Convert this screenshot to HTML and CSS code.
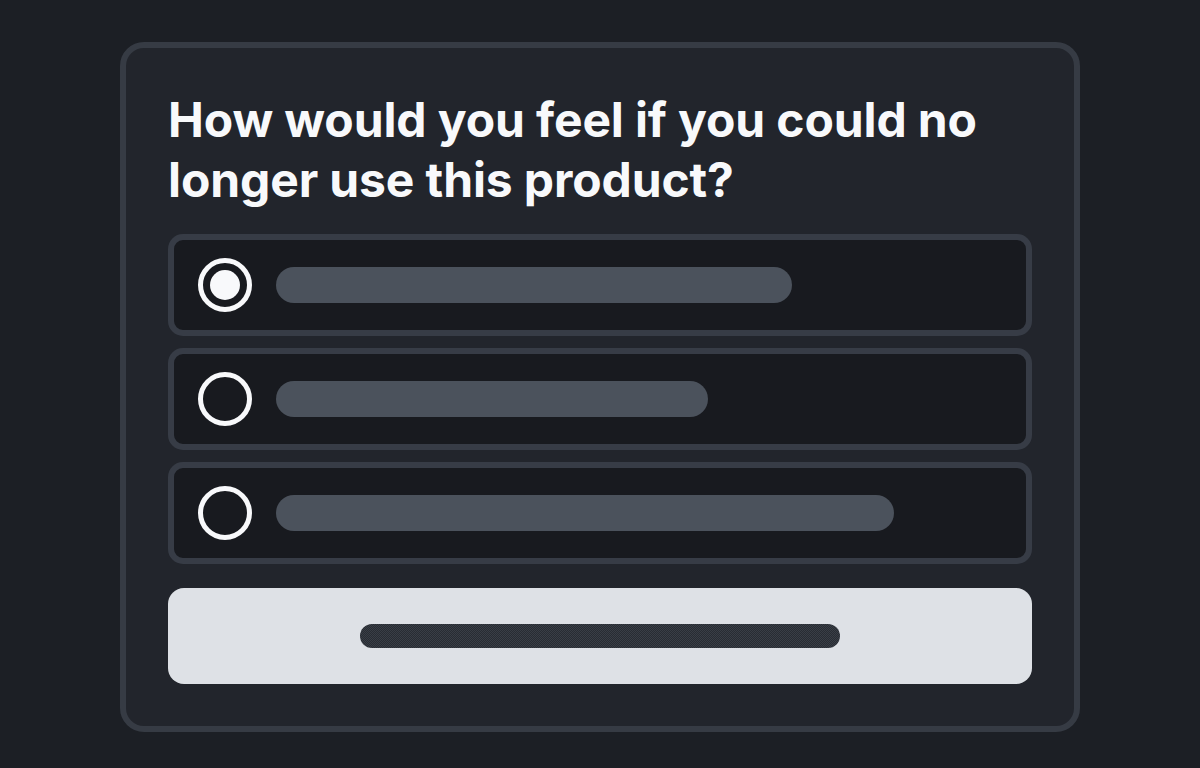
FILE: index.html
```html
<!DOCTYPE html>
<html lang="en">
<head>
    <meta charset="UTF-8">
    <meta name="viewport" content="width=device-width, initial-scale=1.0">
    <title>Survey</title>
    <link rel="stylesheet" href="styles.css">
</head>
<body>

    <div class="survey-card">
        <h1 class="question">How would you feel if you could no longer use this product?</h1>

        <div class="options">
            <div class="option">
                <span class="radio checked"></span>
                <span class="placeholder" style="width: 516px"></span>
            </div>
            <div class="option">
                <span class="radio"></span>
                <span class="placeholder" style="width: 432px"></span>
            </div>
            <div class="option">
                <span class="radio"></span>
                <span class="placeholder" style="width: 618px"></span>
            </div>
        </div>

        <button class="submit-btn"><span class="btn-label"></span></button>
    </div>

</body>
</html>
```

FILE: styles.css
```css
body {
    margin: 0;
    padding: 42px 0 0;
    background-color: #1c1f25;
    font-family: "Inter", "Noto Sans", sans-serif;
}
.survey-card {
    width: 864px;
    margin: 0 auto;
    padding: 42px;
    background-color: #22252c;
    border: 6px solid #363b44;
    border-radius: 24px;
}
.question {
    margin: 0 0 24px;
    font-size: 48px;
    line-height: 60px;
    font-weight: 700;
    letter-spacing: -0.12px;
    color: #f8f9fb;
}
.options {
    display: flex;
    flex-direction: column;
    gap: 12px;
}
.option {
    display: flex;
    align-items: center;
    gap: 24px;
    height: 90px;
    padding: 0 24px;
    background-color: #181a1f;
    border: 6px solid #373c46;
    border-radius: 15px;
}
.radio {
    box-sizing: border-box;
    width: 54px;
    height: 54px;
    border: 5px solid #f8f9fb;
    border-radius: 50%;
    display: flex;
    align-items: center;
    justify-content: center;
    flex-shrink: 0;
}
.radio.checked::after {
    content: "";
    width: 30px;
    height: 30px;
    border-radius: 50%;
    background-color: #f8f9fb;
}
.placeholder {
    height: 36px;
    border-radius: 18px;
    background-color: #4b525c;
}
.submit-btn {
    display: flex;
    align-items: center;
    justify-content: center;
    width: 100%;
    height: 96px;
    margin-top: 24px;
    padding: 0;
    background-color: #dee1e6;
    border: none;
    border-radius: 16px;
}
.btn-label {
    width: 480px;
    height: 24px;
    border-radius: 12px;
    background-color: #30343b;
    /* fine checker texture on the label bar */
    background-image: repeating-conic-gradient(#282c33 0 25%, #393e46 0 50%);
    background-size: 2px 2px;
}
```
